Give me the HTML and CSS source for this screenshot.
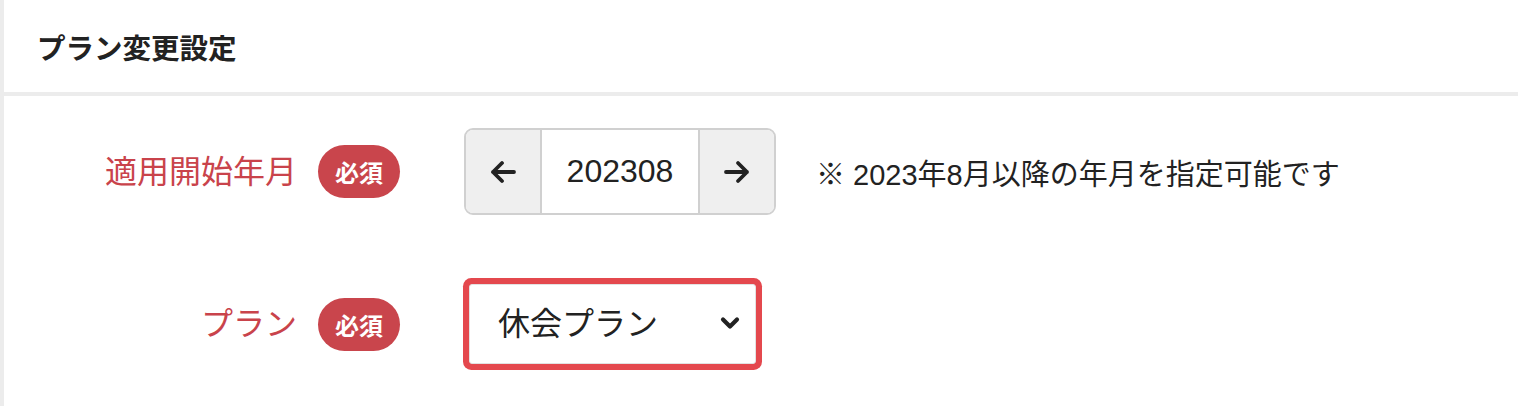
FILE: index.html
```html
<!DOCTYPE html>
<html lang="ja">
<head>
    <meta charset="UTF-8">
    <meta name="viewport" content="width=device-width, initial-scale=1.0">
    <title>プラン変更設定</title>
    <link rel="stylesheet" href="styles.css">
</head>
<body>
    <section class="panel">
        <header class="panel-header">
            <h2>プラン変更設定</h2>
        </header>

        <div class="panel-body">
            <!-- 適用開始年月 -->
            <div class="form-row">
                <div class="label-col">
                    <label class="field-label">適用開始年月</label>
                    <span class="badge">必須</span>
                </div>
                <div class="stepper">
                    <button class="step-btn" aria-label="前月">
                        <svg width="28" height="26" viewBox="0 0 28 26"><path d="M25 13H4 M13 4l-9 9 9 9" fill="none" stroke="#222" stroke-width="3.8" stroke-linecap="round" stroke-linejoin="round"/></svg>
                    </button>
                    <div class="step-value">202308</div>
                    <button class="step-btn" aria-label="翌月">
                        <svg width="28" height="26" viewBox="0 0 28 26"><path d="M3 13h21 M15 4l9 9-9 9" fill="none" stroke="#222" stroke-width="3.8" stroke-linecap="round" stroke-linejoin="round"/></svg>
                    </button>
                </div>
                <p class="note">※ 2023年8月以降の年月を指定可能です</p>
            </div>

            <!-- プラン -->
            <div class="form-row plan-row">
                <div class="label-col">
                    <label class="field-label" for="plan">プラン</label>
                    <span class="badge">必須</span>
                </div>
                <div class="select-wrap">
                    <select id="plan" class="plan-select">
                        <option>休会プラン</option>
                        <option>通常プラン</option>
                    </select>
                    <svg class="select-caret" width="20" height="14" viewBox="0 0 20 14"><path d="M3 3.5l7 7 7-7" fill="none" stroke="#222" stroke-width="4.2" stroke-linecap="round" stroke-linejoin="round"/></svg>
                </div>
            </div>
        </div>
    </section>
</body>
</html>
```

FILE: styles.css
```css
/* Global Styles */
body {
    margin: 0;
    padding: 0;
    background-color: #ffffff;
    color: #222222;
    font-family: "Liberation Sans", "Noto Sans CJK JP", sans-serif;
}

/* Panel */
.panel {
    border-left: 4px solid #ececec;
    min-height: 406px;
    box-sizing: border-box;
}

.panel-header {
    height: 92px;
    display: flex;
    align-items: center;
    padding-left: 33px;
    border-bottom: 4px solid #ececec;
}

.panel-header h2 {
    margin: 0;
    font-size: 28.5px;
    font-weight: 700;
    color: #222222;
}

.panel-body {
    padding-top: 32px;
}

/* Form rows */
.form-row {
    display: flex;
    align-items: center;
}

.plan-row {
    margin-top: 69px;
}

.label-col {
    width: 396px;
    display: flex;
    justify-content: flex-end;
    align-items: center;
    gap: 21px;
    margin-right: 64px;
}

.field-label {
    font-size: 32px;
    color: #c9434b;
    line-height: 1;
}

.badge {
    display: inline-flex;
    align-items: center;
    justify-content: center;
    width: 82px;
    height: 53px;
    border-radius: 27px;
    background-color: #c9454c;
    color: #ffffff;
    font-size: 24px;
    font-weight: 700;
}

/* Month stepper */
.stepper {
    display: flex;
    height: 87px;
    border: 2px solid #d0d0d0;
    border-radius: 9px;
    overflow: hidden;
    box-sizing: border-box;
}

.step-btn {
    width: 74px;
    border: none;
    padding: 0;
    background-color: #efefef;
    display: flex;
    align-items: center;
    justify-content: center;
    cursor: pointer;
}

.step-value {
    width: 156px;
    border-left: 2px solid #d0d0d0;
    border-right: 2px solid #d0d0d0;
    display: flex;
    align-items: center;
    justify-content: center;
    font-size: 32px;
    color: #222222;
}

.note {
    margin: 0 0 0 40px;
    font-size: 29px;
    color: #222222;
}

/* Plan select */
.select-wrap {
    position: relative;
    width: 287px;
    height: 80px;
    margin-left: 5px;
}

.plan-select {
    appearance: none;
    -webkit-appearance: none;
    display: block;
    width: 100%;
    height: 80px;
    box-sizing: border-box;
    padding: 0 0 0 28px;
    border: 1px solid #e2e2e2;
    border-radius: 3px;
    background-color: #ffffff;
    font-family: inherit;
    font-size: 32px;
    color: #222222;
    outline: none;
    box-shadow: 0 0 0 6px #e4484e;
}

.select-caret {
    position: absolute;
    right: 16px;
    top: 32px;
    pointer-events: none;
}
```
